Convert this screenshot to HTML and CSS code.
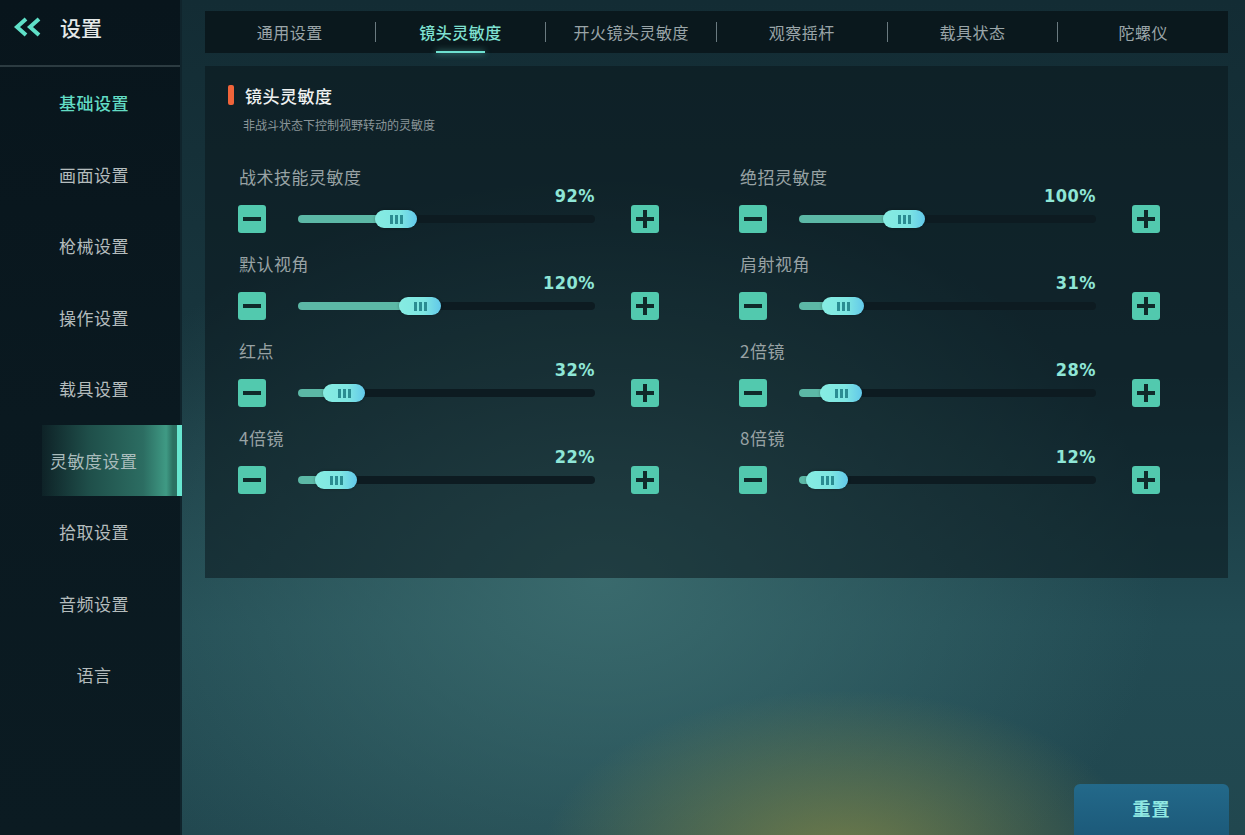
FILE: index.html
```html
<!DOCTYPE html>
<html lang="zh-CN">
<head>
<meta charset="utf-8">
<title>设置</title>
<link rel="stylesheet" href="styles.css">
</head>
<body>
<div class="app">
  <aside class="sidebar">
    <div class="side-head">
      <svg class="back" width="32" height="20" viewBox="0 0 32 20">
        <polyline points="13,2 4,10 13,18" fill="none" stroke="#5fe0c8" stroke-width="4" stroke-linejoin="miter"/>
        <polyline points="26,2 17,10 26,18" fill="none" stroke="#5fe0c8" stroke-width="4" stroke-linejoin="miter"/>
      </svg>
      <span class="side-title">设置</span>
    </div>
    <nav class="menu">
      <div class="menu-item cat">基础设置</div>
      <div class="menu-item">画面设置</div>
      <div class="menu-item">枪械设置</div>
      <div class="menu-item">操作设置</div>
      <div class="menu-item">载具设置</div>
      <div class="menu-item active">灵敏度设置</div>
      <div class="menu-item">拾取设置</div>
      <div class="menu-item">音频设置</div>
      <div class="menu-item">语言</div>
    </nav>
  </aside>

  <main class="main">
    <div class="tabs">
      <div class="tab">通用设置</div>
      <div class="sep"></div>
      <div class="tab active">镜头灵敏度</div>
      <div class="sep"></div>
      <div class="tab">开火镜头灵敏度</div>
      <div class="sep"></div>
      <div class="tab">观察摇杆</div>
      <div class="sep"></div>
      <div class="tab">载具状态</div>
      <div class="sep"></div>
      <div class="tab">陀螺仪</div>
    </div>

    <section class="panel">
      <div class="panel-title"><span class="mark"></span>镜头灵敏度</div>
      <div class="panel-sub">非战斗状态下控制视野转动的灵敏度</div>

      <div class="grid">
        <div class="row">
          <div class="label">战术技能灵敏度</div>
          <div class="control">
            <div class="btn"><span class="minus"></span></div>
            <div class="slider">
              <div class="pct">92%</div>
              <div class="track"><div class="fill" style="width:98px"></div><div class="knob" style="left:77px"><i></i><i></i><i></i></div></div>
            </div>
            <div class="btn"><span class="minus"></span><span class="vert"></span></div>
          </div>
        </div>
        <div class="row">
          <div class="label">绝招灵敏度</div>
          <div class="control">
            <div class="btn"><span class="minus"></span></div>
            <div class="slider">
              <div class="pct">100%</div>
              <div class="track"><div class="fill" style="width:105px"></div><div class="knob" style="left:84px"><i></i><i></i><i></i></div></div>
            </div>
            <div class="btn"><span class="minus"></span><span class="vert"></span></div>
          </div>
        </div>

        <div class="row">
          <div class="label">默认视角</div>
          <div class="control">
            <div class="btn"><span class="minus"></span></div>
            <div class="slider">
              <div class="pct">120%</div>
              <div class="track"><div class="fill" style="width:122px"></div><div class="knob" style="left:101px"><i></i><i></i><i></i></div></div>
            </div>
            <div class="btn"><span class="minus"></span><span class="vert"></span></div>
          </div>
        </div>
        <div class="row">
          <div class="label">肩射视角</div>
          <div class="control">
            <div class="btn"><span class="minus"></span></div>
            <div class="slider">
              <div class="pct">31%</div>
              <div class="track"><div class="fill" style="width:44px"></div><div class="knob" style="left:23px"><i></i><i></i><i></i></div></div>
            </div>
            <div class="btn"><span class="minus"></span><span class="vert"></span></div>
          </div>
        </div>

        <div class="row">
          <div class="label">红点</div>
          <div class="control">
            <div class="btn"><span class="minus"></span></div>
            <div class="slider">
              <div class="pct">32%</div>
              <div class="track"><div class="fill" style="width:46px"></div><div class="knob" style="left:25px"><i></i><i></i><i></i></div></div>
            </div>
            <div class="btn"><span class="minus"></span><span class="vert"></span></div>
          </div>
        </div>
        <div class="row">
          <div class="label">2倍镜</div>
          <div class="control">
            <div class="btn"><span class="minus"></span></div>
            <div class="slider">
              <div class="pct">28%</div>
              <div class="track"><div class="fill" style="width:42px"></div><div class="knob" style="left:21px"><i></i><i></i><i></i></div></div>
            </div>
            <div class="btn"><span class="minus"></span><span class="vert"></span></div>
          </div>
        </div>

        <div class="row">
          <div class="label">4倍镜</div>
          <div class="control">
            <div class="btn"><span class="minus"></span></div>
            <div class="slider">
              <div class="pct">22%</div>
              <div class="track"><div class="fill" style="width:38px"></div><div class="knob" style="left:17px"><i></i><i></i><i></i></div></div>
            </div>
            <div class="btn"><span class="minus"></span><span class="vert"></span></div>
          </div>
        </div>
        <div class="row">
          <div class="label">8倍镜</div>
          <div class="control">
            <div class="btn"><span class="minus"></span></div>
            <div class="slider">
              <div class="pct">12%</div>
              <div class="track"><div class="fill" style="width:28px"></div><div class="knob" style="left:7px"><i></i><i></i><i></i></div></div>
            </div>
            <div class="btn"><span class="minus"></span><span class="vert"></span></div>
          </div>
        </div>
      </div>
    </section>

    <div class="footer">
      <button class="reset">重置</button>
    </div>
  </main>
</div>
</body>
</html>
```

FILE: styles.css
```css
* { box-sizing: border-box; }
html, body {
  margin: 0;
  padding: 0;
  width: 1245px;
  height: 835px;
  overflow: hidden;
  background: #0a1a21;
  font-family: "Noto Sans CJK SC", "Noto Sans", sans-serif;
}
.app {
  display: flex;
  width: 1245px;
  height: 835px;
}

/* Sidebar */
.sidebar {
  width: 182px;
  flex: none;
  display: flex;
  flex-direction: column;
  background: linear-gradient(180deg, #08151c 0%, #0a1920 50%, #0b1b22 100%);
  border-right: 2px solid #10242c;
}
.side-head {
  height: 67px;
  flex: none;
  display: flex;
  align-items: center;
  padding-left: 13px;
  padding-bottom: 12px;
  border-bottom: 2px solid #2c3b41;
}
.back { display: block; }
.side-title {
  margin-left: 15px;
  color: #e4e8e8;
  font-size: 21px;
  line-height: 26px;
  font-weight: 500;
}
.menu {
  display: flex;
  flex-direction: column;
}
.menu-item {
  height: 71.5px;
  display: flex;
  align-items: center;
  justify-content: center;
  padding-left: 8px;
  color: #b4bcbd;
  font-size: 17px;
  letter-spacing: 0.5px;
}
.menu-item.cat {
  color: #62dcc4;
  font-weight: 500;
}
.menu-item.active {
  margin-left: 42px;
  margin-right: -2px;
  justify-content: flex-start;
  padding-left: 8px;
  color: #a9bcbc;
  background: linear-gradient(90deg, rgba(30,70,66,0.2) 0%, #1f4f4a 35%, #2c6d62 75%, #3f9a84 92%, #2c7062 97%);
  border-right: 5px solid #68e6d0;
}

/* Main */
.main {
  flex: 1;
  display: flex;
  flex-direction: column;
  padding: 11px 17px 0 23px;
  background:
    radial-gradient(ellipse 300px 170px at 660px 860px, rgba(130,135,70,0.8), rgba(130,135,70,0) 100%),
    radial-gradient(ellipse 560px 400px at 420px 580px, rgba(62,112,114,0.85), rgba(62,112,114,0) 100%),
    linear-gradient(180deg, #132c34 0%, #18363e 45%, #224b53 75%, #21474f 100%);
}

.tabs {
  height: 42px;
  flex: none;
  display: flex;
  align-items: center;
  background: rgba(8,19,25,0.82);
}
.tab {
  flex: 1;
  height: 42px;
  display: flex;
  align-items: center;
  justify-content: center;
  color: #9aa5a8;
  font-size: 16px;
  letter-spacing: 0.5px;
  position: relative;
}
.tab.active {
  color: #7fe2d2;
  font-weight: 500;
}
.tab.active::after {
  content: "";
  position: absolute;
  left: 50%;
  bottom: 0;
  width: 49px;
  margin-left: -25px;
  height: 2px;
  background: #6ee0d0;
  box-shadow: 0 0 6px rgba(110,224,208,0.7);
}
.sep {
  width: 1px;
  height: 20px;
  background: #6a7a80;
  flex: none;
}

.panel {
  margin-top: 13px;
  height: 512px;
  flex: none;
  padding: 19px 0 0 23px;
  background: rgba(9,21,27,0.52);
}
.panel-title {
  display: flex;
  align-items: center;
  height: 20px;
  color: #eef1f1;
  font-size: 17px;
  font-weight: 500;
  letter-spacing: 0.5px;
}
.mark {
  width: 6px;
  height: 20px;
  border-radius: 2px;
  background: #f0643a;
  margin-right: 11px;
}
.panel-sub {
  margin-top: 12px;
  margin-left: 15px;
  height: 16px;
  line-height: 16px;
  color: #8a9598;
  font-size: 12px;
}

.grid {
  margin-top: 34px;
  margin-left: 10px;
  display: grid;
  grid-template-columns: 421px 421px;
  column-gap: 80px;
  row-gap: 21px;
}
.row {
  display: flex;
  flex-direction: column;
}
.label {
  height: 20px;
  line-height: 20px;
  color: #98a2a4;
  font-size: 17px;
  letter-spacing: 0.5px;
  margin-left: 1px;
}
.control {
  height: 46px;
  display: flex;
  align-items: flex-end;
}
.btn {
  width: 28px;
  height: 28px;
  flex: none;
  border-radius: 3px;
  background: #52c9ae;
  position: relative;
}
.minus {
  position: absolute;
  left: 5px;
  top: 12px;
  width: 18px;
  height: 4px;
  background: #0f2a2a;
}
.vert {
  position: absolute;
  left: 12px;
  top: 5px;
  width: 4px;
  height: 18px;
  background: #0f2a2a;
}
.slider {
  flex: 1;
  margin: 0 36px 5px 32px;
  display: flex;
  flex-direction: column;
}
.pct {
  height: 18px;
  line-height: 18px;
  text-align: right;
  color: #8fe6d6;
  font-family: "DejaVu Sans Condensed", "Liberation Sans Narrow", sans-serif;
  font-weight: bold;
  font-size: 18px;
  margin-bottom: 5px;
  letter-spacing: 0.5px;
}
.track {
  position: relative;
  height: 18px;
}
.track::before {
  content: "";
  position: absolute;
  left: 0;
  right: 0;
  top: 5px;
  height: 8px;
  border-radius: 4px;
  background: #0d1b21;
}
.fill {
  position: absolute;
  left: 0;
  top: 5px;
  height: 8px;
  border-radius: 4px 0 0 4px;
  background: #5cb8a6;
}
.knob {
  position: absolute;
  top: 0;
  width: 42px;
  height: 18px;
  border-radius: 9px;
  background: linear-gradient(90deg, #86ece2 0%, #7ee6e2 60%, #62c8ea 100%);
  display: flex;
  align-items: center;
  justify-content: center;
  gap: 2px;
  box-shadow: 0 0 3px rgba(0,0,0,0.3);
}
.knob i {
  display: block;
  width: 3px;
  height: 9px;
  background: #2b8c92;
}

.footer {
  margin-top: auto;
  display: flex;
  justify-content: flex-end;
  margin-right: -1px;
}
.reset {
  width: 155px;
  height: 51px;
  border: none;
  border-radius: 6px 6px 0 0;
  background: linear-gradient(180deg, #23698a 0%, #1c5a7a 100%);
  color: #8fe8e2;
  font-family: "Noto Sans CJK SC", sans-serif;
  font-size: 18px;
  font-weight: bold;
  letter-spacing: 1px;
  padding: 0 0 4px 0;
}
```
